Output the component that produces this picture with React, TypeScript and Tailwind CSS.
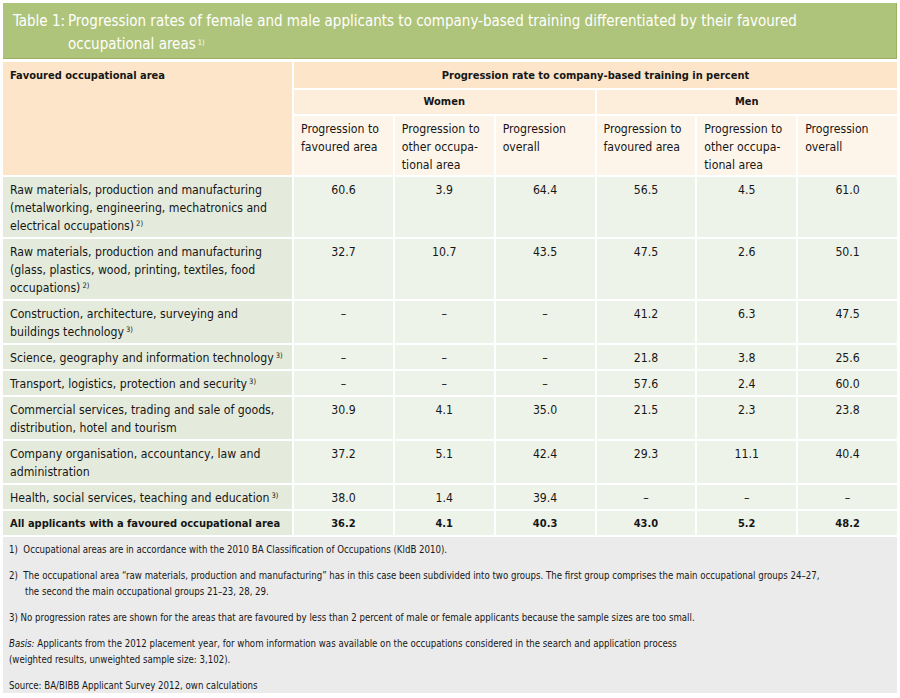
import React from 'react';

const font = { fontFamily: '"DejaVu Sans Condensed", "DejaVu Sans", sans-serif' };

const Sup = ({ n }: { n: string }) => <sup className="ml-[2px] text-[7.5px]">{n}</sup>;

type Row = { label: React.ReactNode; vals: string[]; bold?: boolean };

const rows: Row[] = [
  {
    label: (
      <>
        Raw materials, production and manufacturing
        <br />
        (metalworking, engineering, mechatronics and
        <br />
        electrical occupations)
        <Sup n="2)" />
      </>
    ),
    vals: ['60.6', '3.9', '64.4', '56.5', '4.5', '61.0'],
  },
  {
    label: (
      <>
        Raw materials, production and manufacturing
        <br />
        (glass, plastics, wood, printing, textiles, food
        <br />
        occupations)
        <Sup n="2)" />
      </>
    ),
    vals: ['32.7', '10.7', '43.5', '47.5', '2.6', '50.1'],
  },
  {
    label: (
      <>
        Construction, architecture, surveying and
        <br />
        buildings technology
        <Sup n="3)" />
      </>
    ),
    vals: ['–', '–', '–', '41.2', '6.3', '47.5'],
  },
  {
    label: (
      <>
        Science, geography and information technology
        <Sup n="3)" />
      </>
    ),
    vals: ['–', '–', '–', '21.8', '3.8', '25.6'],
  },
  {
    label: (
      <>
        Transport, logistics, protection and security
        <Sup n="3)" />
      </>
    ),
    vals: ['–', '–', '–', '57.6', '2.4', '60.0'],
  },
  {
    label: (
      <>
        Commercial services, trading and sale of goods,
        <br />
        distribution, hotel and tourism
      </>
    ),
    vals: ['30.9', '4.1', '35.0', '21.5', '2.3', '23.8'],
  },
  {
    label: (
      <>
        Company organisation, accountancy, law and
        <br />
        administration
      </>
    ),
    vals: ['37.2', '5.1', '42.4', '29.3', '11.1', '40.4'],
  },
  {
    label: (
      <>
        Health, social services, teaching and education
        <Sup n="3)" />
      </>
    ),
    vals: ['38.0', '1.4', '39.4', '–', '–', '–'],
  },
  {
    label: 'All applicants with a favoured occupational area',
    vals: ['36.2', '4.1', '40.3', '43.0', '5.2', '48.2'],
    bold: true,
  },
];

const colHeads: React.ReactNode[] = [
  <>
    Progression to
    <br />
    favoured area
  </>,
  <>
    Progression to
    <br />
    other occupa-
    <br />
    tional area
  </>,
  <>
    Progression
    <br />
    overall
  </>,
];

const App = () => {
  return (
    <div className="w-[900px] h-[698px] bg-white p-[3px] text-[#161616]" style={font}>
      {/* title */}
      <div className="flex h-[56px] bg-[#afc47b] border-b border-r border-[#9db066] pl-[10px] pt-[7px] text-[15px] leading-[23px] text-white">
        <span className="shrink-0 w-[55px]">Table 1:</span>
        <span>
          Progression rates of female and male applicants to company-based training differentiated by their favoured
          <br />
          occupational areas
          <Sup n="1)" />
        </span>
      </div>

      {/* table */}
      <div className="mt-[3px] grid grid-cols-[289px_repeat(6,minmax(0,1fr))] gap-[2px] text-[12.2px] leading-[18px]">
        <div className="row-span-3 bg-[#fce5c8] px-[7px] pt-[5px] text-[11px] font-bold">Favoured occupational area</div>
        <div className="col-span-6 bg-[#fce5c8] h-[26px] pt-[5px] text-center text-[11px] font-bold">
          Progression rate to company-based training in percent
        </div>
        <div className="col-span-3 bg-[#fdeddb] h-[24px] pt-[3px] text-center text-[11px] font-bold">Women</div>
        <div className="col-span-3 bg-[#fdeddb] h-[24px] pt-[3px] text-center text-[11px] font-bold">Men</div>
        {[...colHeads, ...colHeads].map((h, i) => (
          <div key={i} className="bg-[#fef5ea] h-[59px] px-[7px] pt-[4px] whitespace-nowrap">
            {h}
          </div>
        ))}

        {rows.map((r, i) => (
          <React.Fragment key={i}>
            <div
              className={
                r.bold
                  ? 'bg-[#e4ebdc] px-[7px] pt-[4px] pb-[2px] text-[11px] font-bold whitespace-nowrap'
                  : 'bg-[#e4ebdc] px-[7px] pt-[4px] pb-[2px] whitespace-nowrap'
              }
            >
              {r.label}
            </div>
            {r.vals.map((v, j) => (
              <div
                key={j}
                className={
                  r.bold
                    ? 'bg-[#eef3ea] pt-[4px] pb-[2px] text-center text-[11px] font-bold'
                    : 'bg-[#eef3ea] pt-[4px] pb-[2px] text-center'
                }
              >
                {v}
              </div>
            ))}
          </React.Fragment>
        ))}
      </div>

      {/* notes */}
      <div className="mt-[2px] h-[156px] bg-[#ebebec] px-[6px] pt-[5px] text-[9.6px] leading-[16px] flex flex-col gap-[10px] whitespace-nowrap">
        <p>1)&nbsp;&nbsp;Occupational areas are in accordance with the 2010 BA Classification of Occupations (KldB 2010).</p>
        <p className="pl-[16px] -indent-[16px]">
          2)&nbsp;&nbsp;The occupational area “raw materials, production and manufacturing” has in this case been
          subdivided into two groups. The first group comprises the main occupational groups 24–27,
          <br />
          the second the main occupational groups 21–23, 28, 29.
        </p>
        <p>
          3) No progression rates are shown for the areas that are favoured by less than 2 percent of male or female
          applicants because the sample sizes are too small.
        </p>
        <p>
          <i>Basis:</i> Applicants from the 2012 placement year, for whom information was available on the occupations
          considered in the search and application process
          <br />
          (weighted results, unweighted sample size: 3,102).
        </p>
        <p>Source: BA/BIBB Applicant Survey 2012, own calculations</p>
      </div>
    </div>
  );
};

export default App;
